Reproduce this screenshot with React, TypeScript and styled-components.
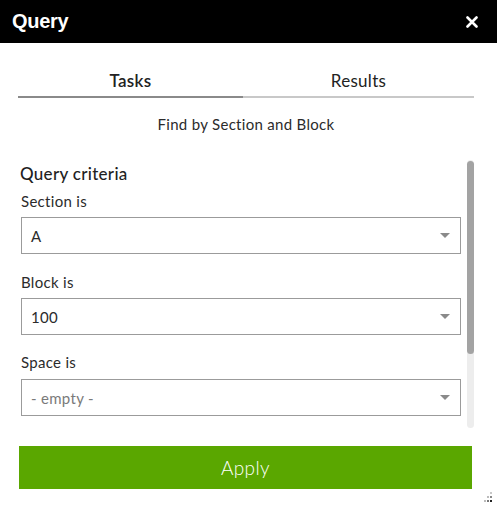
import React from "react";
import styled, { createGlobalStyle } from "styled-components";

const Global = createGlobalStyle`
  html, body { margin: 0; padding: 0; background: #fff; }
  body { font-family: Lato, "Noto Sans", sans-serif; color: #323232; letter-spacing: 0.3px; }
  * { box-sizing: border-box; }
`;

const Panel = styled.div`
  width: 497px;
  height: 508px;
  display: flex;
  flex-direction: column;
  background: #fff;
`;

const Header = styled.header`
  height: 43px;
  background: #000;
  color: #fff;
  display: flex;
  align-items: center;
  justify-content: space-between;
  padding: 0 19px 0 12px;
`;

const Title = styled.h1`
  margin: 0;
  font-family: "Liberation Sans", Arial, sans-serif;
  font-size: 20px;
  font-weight: 700;
  letter-spacing: -0.3px;
`;

const CloseButton = styled.button`
  border: 0;
  background: none;
  padding: 0;
  width: 12px;
  height: 12px;
  display: flex;
  cursor: pointer;
`;

const Body = styled.div`
  display: flex;
  flex-direction: column;
  padding: 0 23px 0 18px;
`;

const Tabs = styled.div`
  display: grid;
  grid-template-columns: 225px 1fr;
`;

const Tab = styled.button<{ $active?: boolean }>`
  border: 0;
  background: none;
  font-family: inherit;
  font-size: 17px;
  letter-spacing: 0.3px;
  line-height: 24px;
  padding: 26px 0 3px;
  color: #222;
  font-weight: ${(p) => (p.$active ? 600 : 400)};
  border-bottom: 2px solid ${(p) => (p.$active ? "#8a8a8a" : "#c8c8c8")};
  cursor: pointer;
`;

const Subtitle = styled.p`
  margin: 16px 0 0;
  text-align: center;
  font-size: 15px;
  line-height: 20px;
  color: #2b2b2b;
`;

const ScrollArea = styled.div`
  margin-top: 26px;
  height: 268px;
  display: flex;
  gap: 6px;
`;

const Fields = styled.div`
  width: 443px;
  padding: 3px 0 0 3px;
  display: flex;
  flex-direction: column;
`;

const SectionTitle = styled.h2`
  margin: 0 0 0 -1px;
  font-size: 17px;
  line-height: 22px;
  font-weight: 500;
  color: #1f1f1f;
`;

const Label = styled.label<{ $gap: number }>`
  margin-top: ${(p) => p.$gap}px;
  font-size: 15px;
  line-height: 20px;
  color: #2b2b2b;
`;

const Select = styled.div<{ $gap: number }>`
  margin-top: ${(p) => p.$gap}px;
  height: 37px;
  border: 1px solid #9b9b9b;
  display: flex;
  align-items: center;
  justify-content: space-between;
  padding: 0 10px 0 9px;
`;

const SelectValue = styled.span<{ $placeholder?: boolean }>`
  font-size: 15px;
  color: ${(p) => (p.$placeholder ? "#7a7a7a" : "#2b2b2b")};
`;

const Caret = styled.span`
  width: 0;
  height: 0;
  border-left: 5px solid transparent;
  border-right: 5px solid transparent;
  border-top: 5px solid #8a8a8a;
`;

const Track = styled.div`
  width: 7px;
  height: 268px;
  border-radius: 4px;
  background: #ededed;
  display: flex;
  flex-direction: column;
`;

const Thumb = styled.div`
  height: 193px;
  margin-top: 1px;
  border-radius: 4px;
  background: #a3a3a3;
`;

const ApplyButton = styled.button`
  margin: 18px 2px 0 1px;
  height: 43px;
  border: 0;
  background: #5aa700;
  color: #fff;
  font-family: inherit;
  font-size: 19px;
  letter-spacing: 0.4px;
  font-weight: 300;
  cursor: pointer;
`;

const Footer = styled.div`
  display: flex;
  justify-content: flex-end;
  padding: 3px 3px 0 0;
`;

const fields = [
  { label: "Section is", value: "A", labelGap: 6, selectGap: 6 },
  { label: "Block is", value: "100", labelGap: 18, selectGap: 6 },
  { label: "Space is", value: "- empty -", placeholder: true, labelGap: 17, selectGap: 7 },
];

export default function App() {
  return (
    <>
      <Global />
      <Panel>
        <Header>
          <Title>Query</Title>
          <CloseButton aria-label="Close">
            <svg width="12" height="12" viewBox="0 0 12 12">
              <path d="M1.5 1.5 L10.5 10.5 M10.5 1.5 L1.5 10.5" stroke="#fff" strokeWidth="2.6" strokeLinecap="round" />
            </svg>
          </CloseButton>
        </Header>
        <Body>
          <Tabs>
            <Tab $active>Tasks</Tab>
            <Tab>Results</Tab>
          </Tabs>
          <Subtitle>Find by Section and Block</Subtitle>
          <ScrollArea>
            <Fields>
              <SectionTitle>Query criteria</SectionTitle>
              {fields.map((f) => (
                <React.Fragment key={f.label}>
                  <Label $gap={f.labelGap}>{f.label}</Label>
                  <Select $gap={f.selectGap}>
                    <SelectValue $placeholder={f.placeholder}>{f.value}</SelectValue>
                    <Caret />
                  </Select>
                </React.Fragment>
              ))}
            </Fields>
            <Track>
              <Thumb />
            </Track>
          </ScrollArea>
          <ApplyButton>Apply</ApplyButton>
        </Body>
        <Footer>
          <svg width="12" height="12" viewBox="0 0 12 12">
            <rect x="8" y="0" width="2" height="2" fill="#c8c8c8" />
            <rect x="5" y="4" width="2" height="2" fill="#bbb" />
            <rect x="8" y="4" width="2" height="2" fill="#888" />
            <rect x="2" y="8" width="2" height="2" fill="#bbb" />
            <rect x="5" y="8" width="2" height="2" fill="#777" />
            <rect x="8" y="8" width="2" height="2" fill="#222" />
          </svg>
        </Footer>
      </Panel>
    </>
  );
}
